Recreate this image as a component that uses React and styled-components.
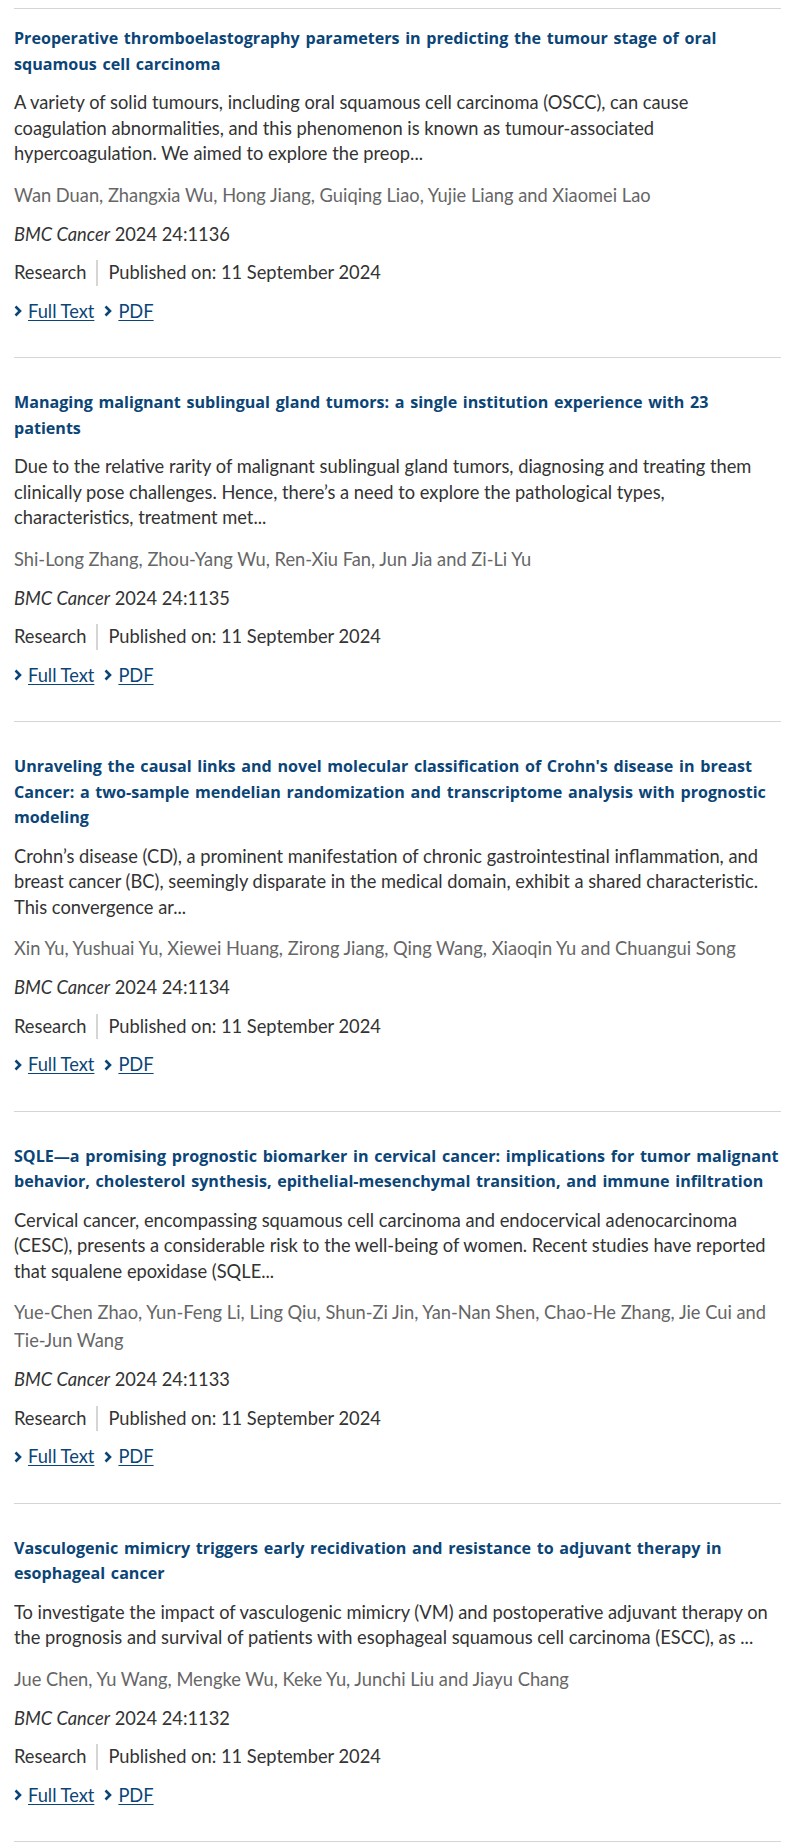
import React from 'react';
import styled, { createGlobalStyle } from 'styled-components';

const GlobalStyle = createGlobalStyle`
    body {
        margin: 0;
        background: #fff;
        font-family: Lato, "Liberation Sans", sans-serif;
    }
`

const Page = styled.div`
    padding: 8px 24px 8px 14px;
`

const List = styled.ul`
    list-style: none;
    margin: 0;
    padding: 0;
    border-top: 1px solid #d5d5d5;
`

const Item = styled.li`
    padding: ${props => props.first ? "17px" : "32px"} 0 33px;
    border-bottom: 1px solid #d5d5d5;
`

const Title = styled.h3`
    margin: 0 0 13px;
    font-family: "Open Sans", Lato, sans-serif;
    font-size: 16.1px;
    word-spacing: 1.5px;
    line-height: 25.5px;
    font-weight: 700;
    color: #0b4577;
`

const Snippet = styled.p`
    margin: 0 0 14px;
    font-size: 18.3px;
    line-height: 25.5px;
    color: #333;
`

const Authors = styled.p`
    margin: 0 0 13px;
    font-size: 18.3px;
    line-height: 28px;
    color: #666;
`

const Journal = styled.p`
    margin: 0 0 13px;
    font-size: 18.3px;
    line-height: 25.5px;
    color: #333;
`

const Meta = styled.div`
    display: flex;
    align-items: center;
    margin: 0 0 13px;
    font-size: 18.3px;
    line-height: 25.5px;
    color: #333;
`

const MetaItem = styled.span`
    padding: 0 10px;
    border-left: ${props => props.divided ? "2px solid #d5d5d5" : "none"};
    &:first-child { padding-left: 0; }
`

const Links = styled.div`
    display: flex;
    align-items: center;
    gap: 10px;
    font-size: 18.3px;
    line-height: 25.5px;
`

const LinkItem = styled.a`
    display: inline-flex;
    align-items: center;
    gap: 6px;
    color: #0b4577;
    text-decoration: none;
    span {
        text-decoration: underline;
        text-underline-offset: 2px;
    }
`

const Chevron = () => (
    <svg width="8" height="12" viewBox="0 0 8 12">
        <path d="M1.5 1.5 L6 6 L1.5 10.5" fill="none" stroke="#0b4577" strokeWidth="2.6" />
    </svg>
)

const articles = [
    {
        title: "Preoperative thromboelastography parameters in predicting the tumour stage of oral squamous cell carcinoma",
        snippet: "A variety of solid tumours, including oral squamous cell carcinoma (OSCC), can cause coagulation abnormalities, and this phenomenon is known as tumour-associated hypercoagulation. We aimed to explore the preop...",
        authors: "Wan Duan, Zhangxia Wu, Hong Jiang, Guiqing Liao, Yujie Liang and Xiaomei Lao",
        citation: "2024 24:1136"
    },
    {
        title: "Managing malignant sublingual gland tumors: a single institution experience with 23 patients",
        snippet: "Due to the relative rarity of malignant sublingual gland tumors, diagnosing and treating them clinically pose challenges. Hence, there\u2019s a need to explore the pathological types, characteristics, treatment met...",
        authors: "Shi-Long Zhang, Zhou-Yang Wu, Ren-Xiu Fan, Jun Jia and Zi-Li Yu",
        citation: "2024 24:1135"
    },
    {
        title: "Unraveling the causal links and novel molecular classification of Crohn's disease in breast Cancer: a two-sample mendelian randomization and transcriptome analysis with prognostic modeling",
        snippet: "Crohn\u2019s disease (CD), a prominent manifestation of chronic gastrointestinal inflammation, and breast cancer (BC), seemingly disparate in the medical domain, exhibit a shared characteristic. This convergence ar...",
        authors: "Xin Yu, Yushuai Yu, Xiewei Huang, Zirong Jiang, Qing Wang, Xiaoqin Yu and Chuangui Song",
        citation: "2024 24:1134"
    },
    {
        title: "SQLE\u2014a promising prognostic biomarker in cervical cancer: implications for tumor malignant behavior, cholesterol synthesis, epithelial-mesenchymal transition, and immune infiltration",
        snippet: "Cervical cancer, encompassing squamous cell carcinoma and endocervical adenocarcinoma (CESC), presents a considerable risk to the well-being of women. Recent studies have reported that squalene epoxidase (SQLE...",
        authors: "Yue-Chen Zhao, Yun-Feng Li, Ling Qiu, Shun-Zi Jin, Yan-Nan Shen, Chao-He Zhang, Jie Cui and Tie-Jun Wang",
        citation: "2024 24:1133"
    },
    {
        title: "Vasculogenic mimicry triggers early recidivation and resistance to adjuvant therapy in esophageal cancer",
        snippet: "To investigate the impact of vasculogenic mimicry (VM) and postoperative adjuvant therapy on the prognosis and survival of patients with esophageal squamous cell carcinoma (ESCC), as ...",
        authors: "Jue Chen, Yu Wang, Mengke Wu, Keke Yu, Junchi Liu and Jiayu Chang",
        citation: "2024 24:1132"
    }
]

const App = () => {
    return (
        <Page>
            <GlobalStyle />
            <List>
                {articles.map((a, i) => (
                    <Item key={a.citation} first={i === 0}>
                        <Title>{a.title}</Title>
                        <Snippet>{a.snippet}</Snippet>
                        <Authors>{a.authors}</Authors>
                        <Journal><i>BMC Cancer</i> {a.citation}</Journal>
                        <Meta>
                            <MetaItem>Research</MetaItem>
                            <MetaItem divided>Published on: 11 September 2024</MetaItem>
                        </Meta>
                        <Links>
                            <LinkItem href="#"><Chevron /><span>Full Text</span></LinkItem>
                            <LinkItem href="#"><Chevron /><span>PDF</span></LinkItem>
                        </Links>
                    </Item>
                ))}
            </List>
        </Page>
    )
}

export default App
